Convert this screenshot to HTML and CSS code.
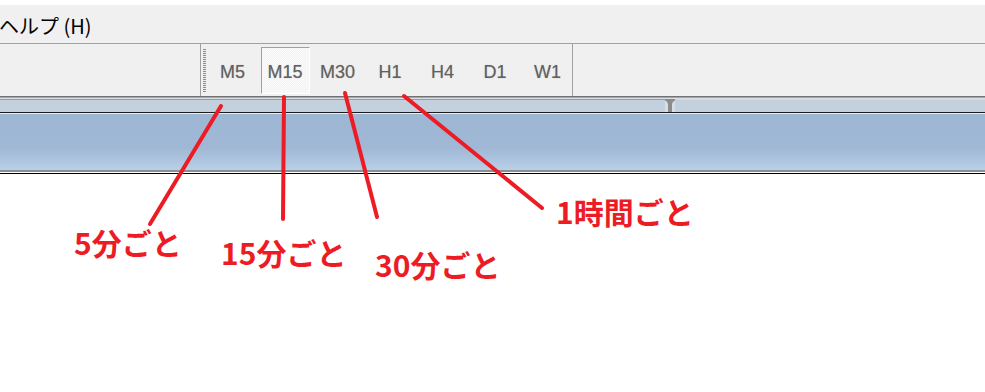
FILE: index.html
```html
<!DOCTYPE html>
<html lang="ja">
<head>
<meta charset="UTF-8">
<title>時間足ツールバー</title>
<link rel="stylesheet" href="styles.css">
</head>
<body>

<!-- MENU -->
<div class="top-gap"></div>
<div class="menubar">
    <span class="menu-item">ヘルプ (H)</span>
</div>

<!-- TOOLBAR -->
<div class="toolbar">
    <div class="band-empty"></div>
    <div class="band-tf">
        <div class="grip"></div>
        <div class="tf-buttons">
            <div class="tf-btn">M5</div>
            <div class="tf-btn checked">M15</div>
            <div class="tf-btn">M30</div>
            <div class="tf-btn">H1</div>
            <div class="tf-btn">H4</div>
            <div class="tf-btn">D1</div>
            <div class="tf-btn">W1</div>
        </div>
    </div>
</div>

<!-- TABS + CHART HEADER -->
<div class="tabstrip">
    <div class="tab tab-left"></div>
    <svg class="tab-split" width="10" height="13" viewBox="0 0 10 13">
        <path d="M0 0 H10 V1.5 Q7 2.5 7 6 V13 H3 V6 Q3 2.5 0 1.5 Z" fill="#8c8c8c"/>
    </svg>
    <div class="tab tab-right"></div>
</div>
<div class="chart-head"></div>
<div class="chart-foot"></div>
<div class="chart-body"></div>

<!-- RED NOTES -->
<div class="notes">
    <svg class="note-lines" width="985" height="392" viewBox="0 0 985 392">
        <g stroke="#ed1c24" stroke-width="4" stroke-linecap="round" fill="none">
            <line x1="221" y1="106" x2="150" y2="224"/>
            <line x1="284" y1="97" x2="283" y2="219"/>
            <line x1="345" y1="93" x2="377" y2="217"/>
            <line x1="404" y1="96" x2="542" y2="208"/>
        </g>
    </svg>
    <div class="note note-m5">5分ごと</div>
    <div class="note note-m15">15分ごと</div>
    <div class="note note-m30">30分ごと</div>
    <div class="note note-h1">1時間ごと</div>
</div>

</body>
</html>
```

FILE: styles.css
```css
body {
    margin: 0;
    width: 985px;
    height: 392px;
    overflow: hidden;
    position: relative;
    background: #ffffff;
    font-family: "Noto Sans CJK JP", sans-serif;
}

/* MENU */
.top-gap {
    height: 5px;
    background: #ffffff;
}

.menubar {
    height: 38px;
    background: #f0f0f0;
    border-bottom: 1px solid #a0a0a0;
    display: flex;
    align-items: center;
}

.menu-item {
    font-size: 20px;
    color: #000000;
    margin-left: -1px;
    padding-top: 3px;
}

/* TOOLBAR */
.toolbar {
    height: 52px;
    background: #f0f0f0;
    display: flex;
    border-bottom: 1px solid #727272;
}

.band-empty {
    width: 200px;
    border-right: 1px solid #a0a0a0;
}

.band-tf {
    display: flex;
    align-items: flex-start;
}

.grip {
    width: 3px;
    height: 44px;
    margin: 5px 0 0 2px;
    background: repeating-linear-gradient(to bottom, #8a8a8a 0 1px, transparent 1px 2px);
}

.tf-buttons {
    display: flex;
    gap: 3.5px;
    margin-left: 2px;
    padding-top: 3px;
    height: 49px;
    border-right: 1px solid #a0a0a0;
}

.tf-btn {
    width: 49px;
    height: 47px;
    box-sizing: border-box;
    display: flex;
    align-items: center;
    justify-content: center;
    padding-top: 3px;
    font-family: "Liberation Sans", sans-serif;
    font-size: 18px;
    color: #606060;
    text-shadow: 0 0 1px #b0b0b0;
}

.tf-btn.checked {
    border: 1px solid;
    border-color: #a0a0a0 #ffffff #ffffff #a0a0a0;
    background: repeating-conic-gradient(#f3f3f3 0 25%, #fbfbfb 0 50%) 0 0 / 2px 2px;
}

/* TABS */
.tabstrip {
    height: 14px;
    display: flex;
    border-top: 1px solid #a6a6a6;
    background: #d9dee4;
    border-bottom: 1px solid #1e1e1e;
}

.tab {
    margin-top: 1px;
    background: #c3d1df;
}

.tab-left {
    width: 665px;
    border-top: 1px solid #9a9a9a;
}

.tab-split {
    margin-top: 1px;
}

.tab-right {
    flex: 1;
    border-top: 1px solid #d0d8e0;
}

.chart-head {
    height: 56px;
    border-top: 1px solid #e4ebf3;
    background: linear-gradient(#9db6d3 0%, #a0b8d5 60%, #a9c0dc 75%, #b9d0ea 100%);
    border-bottom: 2px solid #8e8e8e;
}

.chart-foot {
    height: 1px;
    background: #ffffff;
    border-bottom: 1px solid #000000;
}

/* NOTES */
.notes {
    position: absolute;
    top: 0;
    left: 0;
    width: 985px;
    height: 392px;
    pointer-events: none;
}

.note-lines {
    position: absolute;
    top: 0;
    left: 0;
}

.note {
    position: absolute;
    font-size: 30px;
    line-height: 30px;
    font-weight: 700;
    color: #ed1c24;
    white-space: nowrap;
}

.note-m5 { left: 74px; top: 227px; }
.note-m15 { left: 221px; top: 237px; }
.note-m30 { left: 375px; top: 249px; }
.note-h1 { left: 556px; top: 196px; }
```
